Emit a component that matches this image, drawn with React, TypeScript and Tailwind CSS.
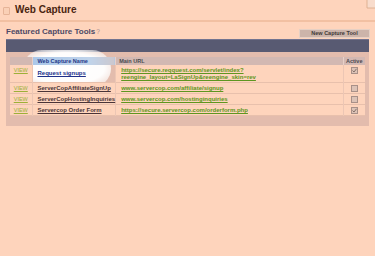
import React from "react";

const rows = [
  { name: "Request signups", url: ["https://secure.reqquest.com/servlet/index?", "reengine_layout=LaSignUp&reengine_skin=rev"], active: true },
  { name: "ServerCopAffiliateSignUp", url: ["www.servercop.com/affiliate/signup"], active: false },
  { name: "ServerCopHostingInquiries", url: ["www.servercop.com/hostinginquiries"], active: false },
  { name: "Servercop Order Form", url: ["https://secure.servercop.com/orderform.php"], active: true },
];

function Check({ on }: { on: boolean }) {
  return (
    <div className="w-[7px] h-[7px] border border-[#a89088] bg-[#dcc2b6] flex items-center justify-center">
      {on && (
        <svg width="5" height="5" viewBox="0 0 5 5">
          <path d="M0.5 2.5 L2 4 L4.5 0.8" stroke="#7a6860" strokeWidth="0.9" fill="none" />
        </svg>
      )}
    </div>
  );
}

export default function App() {
  return (
    <div className="w-[375px] h-[256px] bg-[#fed4bc] overflow-hidden relative" style={{ fontFamily: "Arial, 'Liberation Sans', sans-serif" }}>
      {/* Title bar */}
      <div className="h-[22px] border-b-2 border-[#f2c0a2] flex items-center relative">
        <div className="ml-[3px] mt-[1px] w-[7px] h-[8px] rounded-[1px] border border-[#e6b498] bg-[#fad0b6]" />
        <div className="ml-[5px] text-[10px] font-bold text-[#4a2410] leading-none">Web Capture</div>
        <svg className="absolute right-0 top-0" width="9" height="9" viewBox="0 0 9 9">
          <path d="M1 0 L1 8 L9 8 L9 0 Z" fill="#f8dccc" />
          <path d="M1 0 L1 8 L9 8" fill="none" stroke="#d8a888" strokeWidth="0.8" />
        </svg>
      </div>
      {/* Section header */}
      <div className="h-[15px] flex items-end justify-between px-[6px]">
        <div className="text-[8px] font-bold text-[#4e4a66] leading-none pb-[1px]">
          Featured Capture Tools<span className="text-[#a89090] font-normal text-[6.5px] ml-[1px]">?</span>
        </div>
        <div className="w-[71px] h-[9px] bg-[#ccb4aa] border border-[#e6d0c4] flex items-center justify-center text-[5.5px] font-bold text-[#3e3838] leading-none mr-[-1px] mb-[-1px]">
          New Capture Tool
        </div>
      </div>
      {/* Dark band */}
      <div className="mx-[6px] mt-[2px] h-[13px] bg-[#585a72] border-t border-[#727490]" />
      {/* Panel */}
      <div className="mx-[6px] bg-[#e3bcad] px-[4px] pt-[5px] pb-[10px] relative">
        <div
          className="absolute left-[17px] top-[-2px] w-[88px] h-[37px] rounded-full"
          style={{ background: "radial-gradient(ellipse at center, rgba(255,255,255,1) 0%, rgba(255,255,255,0.97) 60%, rgba(255,255,255,0.6) 80%, rgba(255,255,255,0) 100%)" }}
        />
        <table className="w-full border-collapse relative text-[6px] leading-[7px]">
          <thead>
            <tr className="bg-[#d2b8b2] text-[#4a4850] font-bold h-[8px]">
              <th className="w-[22px] border-r border-[#e8d0c8]" />
              <th className="w-[82px] text-left pl-[5px] border-r border-[#e8d0c8] text-[#243888] font-bold text-[5.5px]" style={{ background: "linear-gradient(to right, rgba(168,200,236,0.95), rgba(190,214,240,0.9) 70%, rgba(200,210,225,0.6))" }}>Web Capture Name</th>
              <th className="text-left pl-[3px] border-r border-[#e8d0c8] text-[5.5px]">Main URL</th>
              <th className="w-[22px] text-center text-[5.5px]">Active</th>
            </tr>
          </thead>
          <tbody>
            {rows.map((r, i) => (
              <tr key={i} className={`${i === 0 ? "bg-transparent" : "bg-[#fed4bc]"} border-b border-[#e8c0ac]`}>
                <td className={`${i === 0 ? "bg-[#fed4bc]" : ""} text-center text-[#9cb038] underline text-[5.5px] align-top pt-[2px] border-r border-[#ecc6b4]`}>VIEW</td>
                <td className={`pl-[5px] border-r border-[#ecc6b4] ${i === 0 ? "align-middle" : "align-top pt-[2px] pb-[1px]"}`}>
                  <span className={`underline font-bold ${i === 0 ? "text-[#20308a]" : "text-[#4a3438]"}`}>{r.name}</span>
                </td>
                <td className={`pl-[5px] align-top pt-[2px] pb-[1px] border-r border-[#ecc6b4] ${i === 0 ? "bg-[#fed4bc]" : ""}`}>
                  {r.url.map((u, k) => (
                    <div key={k} className="underline font-bold text-[#5e9620] whitespace-nowrap">{u}</div>
                  ))}
                </td>
                <td className={`align-top pt-[2px] ${i === 0 ? "bg-[#fed4bc]" : ""}`}>
                  <div className="flex justify-center"><Check on={r.active} /></div>
                </td>
              </tr>
            ))}
          </tbody>
        </table>
      </div>
    </div>
  );
}
